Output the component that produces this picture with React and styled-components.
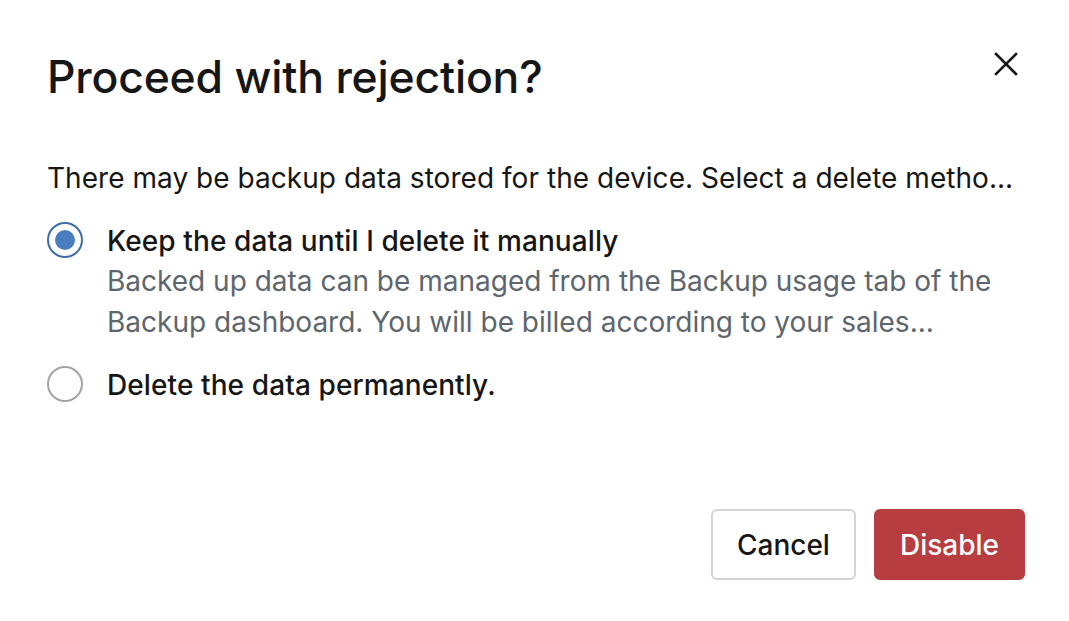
import React, { useState } from "react";
import styled, { createGlobalStyle } from "styled-components";

const Global = createGlobalStyle`
  html, body { margin: 0; padding: 0; background: #ffffff; }
  body { font-family: Inter, "Noto Sans", sans-serif; color: #1a1a1a; -webkit-font-smoothing: antialiased; }
  * { box-sizing: border-box; }
`;

const Dialog = styled.div`
  width: 1069px;
  height: 621px;
  padding: 46px 44px 41px 47px;
  display: flex;
  flex-direction: column;
  background: #fff;
`;

const Header = styled.div`
  display: flex;
  justify-content: space-between;
  align-items: flex-start;
`;

const Title = styled.h1`
  margin: 0;
  font-size: 44.5px;
  font-weight: 500;
  line-height: 62px;
  letter-spacing: -0.2px;
  color: #161616;
`;

const CloseButton = styled.button`
  border: none;
  background: none;
  padding: 0;
  margin: 4px 5px 0 0;
  width: 28px;
  height: 28px;
  display: flex;
  align-items: center;
  justify-content: center;
  cursor: pointer;
  color: #161616;
`;

const Body = styled.div`
  margin-top: 50px;
  display: flex;
  flex-direction: column;
  flex: 1;
`;

const Intro = styled.p`
  margin: 0;
  font-size: 28px;
  line-height: 40px;
  letter-spacing: 0.04px;
  color: #161616;
`;

const Options = styled.div`
  margin-top: 23px;
  display: flex;
  flex-direction: column;
  gap: 22px;
`;

const Option = styled.label`
  display: flex;
  align-items: flex-start;
  gap: 24px;
  cursor: pointer;
`;

const Radio = styled.span`
  flex: none;
  width: 36px;
  height: 36px;
  margin-top: 1px;
  border-radius: 50%;
  border: 2px solid ${(p) => (p.$checked ? "#3d6ea8" : "#a3a3a3")};
  display: flex;
  align-items: center;
  justify-content: center;
  &::after {
    content: "";
    width: 20px;
    height: 20px;
    border-radius: 50%;
    background: ${(p) => (p.$checked ? "#4a7dbf" : "transparent")};
  }
`;

const OptionText = styled.div`
  display: flex;
  flex-direction: column;
`;

const OptionLabel = styled.span`
  font-size: 28px;
  font-weight: 500;
  line-height: 40px;
  letter-spacing: 0.1px;
  color: #161616;
`;

const OptionDesc = styled.span`
  font-size: 28px;
  line-height: 41px;
  color: #5e666d;
`;

const Footer = styled.div`
  margin-top: auto;
  display: flex;
  justify-content: flex-end;
  gap: 18px;
`;

const Button = styled.button`
  height: 71px;
  padding: 0 24px;
  border-radius: 6px;
  font-family: Inter, "Noto Sans", sans-serif;
  font-size: 28px;
  font-weight: 500;
  cursor: pointer;
  border: 2px solid ${(p) => (p.$primary ? "#b83d41" : "#d4d4d4")};
  background: ${(p) => (p.$primary ? "#b83d41" : "#ffffff")};
  color: ${(p) => (p.$primary ? "#ffffff" : "#161616")};
`;

const options = [
  {
    id: "keep",
    label: "Keep the data until I delete it manually",
    desc: [
      "Backed up data can be managed from the Backup usage tab of the",
      "Backup dashboard. You will be billed according to your sales...",
    ],
  },
  { id: "delete", label: "Delete the data permanently.", desc: null },
];

export default function App() {
  const [value, setValue] = useState("keep");
  return (
    <>
      <Global />
      <Dialog>
        <Header>
          <Title>Proceed with rejection?</Title>
          <CloseButton aria-label="Close">
            <svg width="24" height="24" viewBox="0 0 24 24" fill="none" stroke="currentColor" strokeWidth="2.6" strokeLinecap="square">
              <path d="M2 2L22 22M22 2L2 22" />
            </svg>
          </CloseButton>
        </Header>
        <Body>
          <Intro>There may be backup data stored for the device. Select a delete metho...</Intro>
          <Options>
            {options.map((o) => (
              <Option key={o.id} onClick={() => setValue(o.id)}>
                <Radio $checked={value === o.id} />
                <OptionText>
                  <OptionLabel>{o.label}</OptionLabel>
                  {o.desc && (
                    <OptionDesc>
                      {o.desc[0]}
                      <br />
                      {o.desc[1]}
                    </OptionDesc>
                  )}
                </OptionText>
              </Option>
            ))}
          </Options>
          <Footer>
            <Button>Cancel</Button>
            <Button $primary>Disable</Button>
          </Footer>
        </Body>
      </Dialog>
    </>
  );
}
